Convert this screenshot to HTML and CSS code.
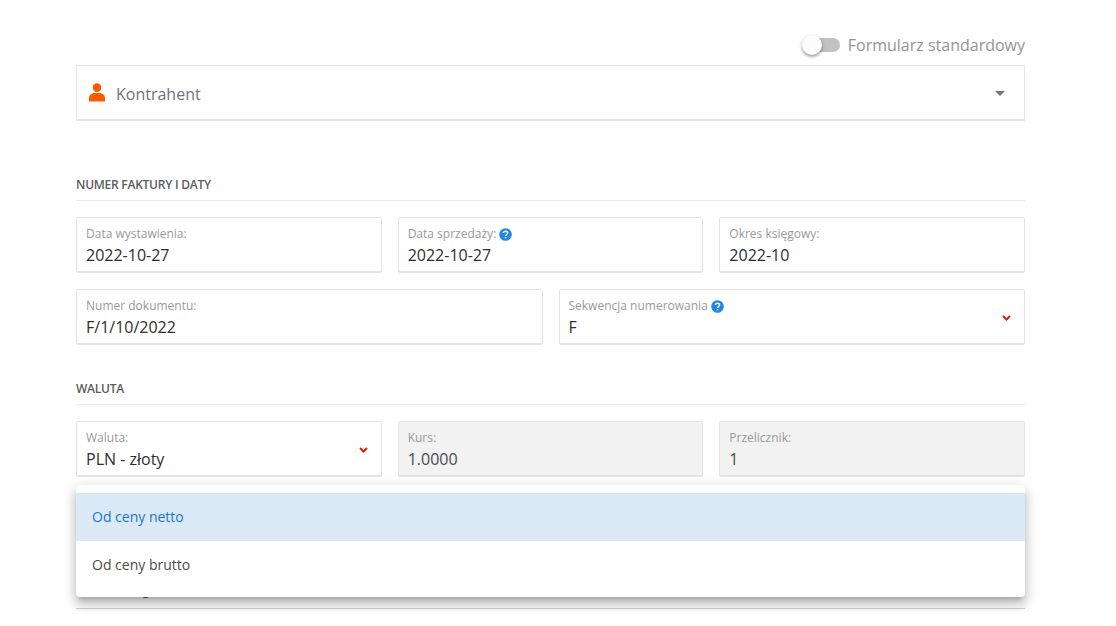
FILE: index.html
```html
<!DOCTYPE html>
<html lang="pl">
<head>
<meta charset="utf-8">
<title>Faktura</title>
<link rel="stylesheet" href="styles.css">
</head>
<body>
<main class="page">
  <div class="toggle-row">
    <span class="switch"><span class="knob"></span></span>
    <span class="toggle-label">Formularz standardowy</span>
  </div>
  <div class="contractor">
    <svg class="person" width="18" height="19" viewBox="0 0 18 19"><circle cx="9" cy="4.6" r="4.3" fill="#ff5a00"/><path d="M1 18.5v-3.2C1 12.300 3.500 10 6.500 10h5c3 0 5.500 2.300 5.500 5.300v3.200z" fill="#ff5a00"/></svg>
    <span class="contractor-name">Kontrahent</span>
    <span class="caret"></span>
  </div>

  <h2 class="section first">NUMER FAKTURY I DATY</h2>
  <div class="grid three">
    <div class="field"><label>Data wystawienia:</label><div class="value">2022-10-27</div></div>
    <div class="field"><label>Data sprzedaży: <svg class="help" width="13" height="13" viewBox="0 0 13 13"><circle cx="6.500" cy="6.500" r="6.300" fill="#1e88e5"/><path d="M4.500 5.100c0-1.200.9-1.900 2-1.900s2.100.7 2.100 1.800c0 1.500-2 1.500-2 2.900" fill="none" stroke="#fff" stroke-width="1.500"/><rect x="5.800" y="8.900" width="1.500" height="1.500" fill="#fff"/></svg></label><div class="value">2022-10-27</div></div>
    <div class="field"><label>Okres księgowy:</label><div class="value">2022-10</div></div>
  </div>
  <div class="grid two">
    <div class="field"><label>Numer dokumentu:</label><div class="value">F/1/10/2022</div></div>
    <div class="field select"><label>Sekwencja numerowania <svg class="help" width="13" height="13" viewBox="0 0 13 13"><circle cx="6.500" cy="6.500" r="6.300" fill="#1e88e5"/><path d="M4.500 5.100c0-1.200.9-1.900 2-1.900s2.100.7 2.100 1.800c0 1.500-2 1.500-2 2.900" fill="none" stroke="#fff" stroke-width="1.500"/><rect x="5.800" y="8.900" width="1.500" height="1.500" fill="#fff"/></svg></label><div class="value">F</div>
      <svg class="chevron" width="9" height="6" viewBox="0 0 9 6"><path d="M1 1l3.500 3.500L8 1" fill="none" stroke="#e01b0c" stroke-width="2"/></svg>
    </div>
  </div>

  <h2 class="section">WALUTA</h2>
  <div class="grid three">
    <div class="field select"><label>Waluta:</label><div class="value">PLN - złoty</div>
      <svg class="chevron" width="9" height="6" viewBox="0 0 9 6"><path d="M1 1l3.500 3.500L8 1" fill="none" stroke="#e01b0c" stroke-width="2"/></svg>
    </div>
    <div class="field disabled"><label>Kurs:</label><div class="value">1.0000</div></div>
    <div class="field disabled"><label>Przelicznik:</label><div class="value">1</div></div>
  </div>

  <div class="table-head">
    <span class="col-name">Nazwa usługi</span>
    <span class="col-qty">Ilość</span>
    <span class="col-net">Cena netto</span>
    <span class="col-vat">Stawka VAT</span>
    <span class="col-amt">Kwota VAT</span>
    <span class="col-gross">Wartość brutto</span>
  </div>

  <ul class="menu">
    <li class="option active">Od ceny netto</li>
    <li class="option">Od ceny brutto</li>
  </ul>
</main>
</body>
</html>
```
FILE: styles.css
```css
* { box-sizing: border-box; }
html, body { margin: 0; padding: 0; background: #fff; }
body { font-family: "Open Sans", "Noto Sans", sans-serif; color: #212121; height: 626px; overflow: hidden; }
.page { position: relative; width: 949px; margin-left: 76px; padding-top: 33px; }

.toggle-row { display: flex; justify-content: flex-end; align-items: center; height: 24px; margin-bottom: 8px; }
.switch { position: relative; display: block; width: 36px; height: 14px; border-radius: 7px; background: #c2c2c2; margin-right: 8px; }
.knob { position: absolute; left: -2px; top: -3px; width: 20px; height: 20px; border-radius: 50%; background: #fcfcfc; box-shadow: 0 2px 3px 0 rgba(0,0,0,.3), 0 1px 4px 0 rgba(0,0,0,.15); }
.toggle-label { font-size: 16px; line-height: 24px; color: #949494; }

.contractor { display: flex; align-items: center; height: 56px; border: 1px solid #e6e6e6; border-bottom-width: 2px; padding: 0 19px 0 11px; }
.person { display: block; margin-top: 0; }
.contractor-name { flex: 1; margin-left: 10px; padding-top: 2px; font-size: 16px; color: #74707c; }
.caret { width: 0; height: 0; border-left: 5px solid transparent; border-right: 5px solid transparent; border-top: 5px solid #757575; margin-top: 2px; }

.section { margin: 0 0 16px; height: 28px; border-bottom: 1px solid #ebebeb; font-size: 12px; font-weight: 600; line-height: 24px; color: #5c5c5c; letter-spacing: -.25px; }
.section.first { margin-top: 52px; }
.section:not(.first) { margin-top: 32px; }

.grid { display: grid; gap: 16px; margin-bottom: 16px; }
.grid.three { grid-template-columns: repeat(3, 1fr); }
.grid.two { grid-template-columns: repeat(2, 1fr); }
.grid:has(+ .section) { margin-bottom: 0; }

.field { position: relative; height: 56px; border: 1px solid #e4e4e4; border-bottom-width: 2px; border-radius: 2px; padding: 8px 9px 0; background: #fff; }
.field label { display: flex; align-items: center; gap: 3px; height: 16px; font-size: 12px; line-height: 16px; color: #999; }
.value { font-size: 16px; line-height: 22px; margin-top: 2px; color: #2e2e2e; }
.field.disabled { background: #f2f2f2; }
.field.disabled .value { color: #4a4a4a; }
.chevron { position: absolute; right: 13px; top: 25px; display: block; }

.table-head { position: relative; height: 38px; margin-top: 94px; border-bottom: 1px solid #d2d2d2; font-size: 12px; font-weight: 600; color: #555; }
.table-head span { position: absolute; top: 12px; line-height: 16px; }
.col-name { left: 0; }
.col-qty { left: 378px; }
.col-net { left: 473px; }
.col-vat { left: 598px; }
.col-amt { left: 709px; }
.col-gross { right: 0; }

.menu { position: absolute; left: 0; right: 0; top: 485px; margin: 0; padding: 8px 0 8px; list-style: none; background: #fff; border-radius: 4px; box-shadow: 0 5px 5px -3px rgba(0,0,0,.2), 0 8px 10px 1px rgba(0,0,0,.14), 0 3px 14px 2px rgba(0,0,0,.12); }
.option { height: 48px; padding: 0 16px; font-size: 14px; line-height: 48px; color: #4a4a4a; }
.option.active { background: #dbe9f7; color: #1976d2; }
```
